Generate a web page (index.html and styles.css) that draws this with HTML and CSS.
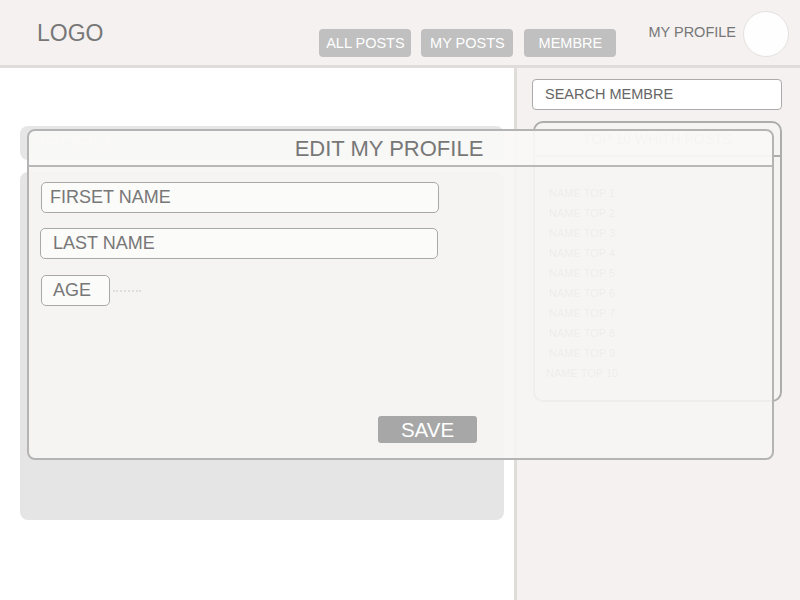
FILE: index.html
```html
<!DOCTYPE html>
<html>
<head>
<meta charset="utf-8">
<link rel="stylesheet" href="styles.css">
</head>
<body>
<header class="topbar">
  <div class="logo">LOGO</div>
  <nav class="nav">
    <a class="nav-btn">ALL POSTS</a>
    <a class="nav-btn">MY POSTS</a>
    <a class="nav-btn">MEMBRE</a>
  </nav>
  <div class="profile">
    <span class="profile-label">MY PROFILE</span>
    <span class="avatar"></span>
  </div>
</header>
<main class="main">
  <section class="content">
    <div class="card-head">PROFILE</div>
    <div class="card-body"></div>
  </section>
  <aside class="sidebar">
    <div class="search">SEARCH MEMBRE</div>
    <div class="top-box">
      <div class="top-head">TOP 10 WHITH POSTS</div>
      <ul class="top-list">
        <li>NAME TOP 1</li>
        <li>NAME TOP 2</li>
        <li>NAME TOP 3</li>
        <li>NAME TOP 4</li>
        <li>NAME TOP 5</li>
        <li>NAME TOP 6</li>
        <li>NAME TOP 7</li>
        <li>NAME TOP 8</li>
        <li>NAME TOP 9</li>
        <li class="last">NAME TOP 10</li>
      </ul>
    </div>
  </aside>
</main>
<div class="modal">
  <div class="modal-head">EDIT MY PROFILE</div>
  <div class="modal-body">
    <div class="field field-first">FIRSET NAME</div>
    <div class="field field-last">LAST NAME</div>
    <div class="age-row">
      <div class="field field-age">AGE</div>
      <span class="dots"></span>
    </div>
    <button class="save">SAVE</button>
  </div>
</div>
</body>
</html>
```
FILE: styles.css
```css
* { box-sizing: border-box; }
html, body { margin: 0; padding: 0; }
body {
  width: 800px;
  height: 600px;
  overflow: hidden;
  font-family: "Liberation Sans", Arial, sans-serif;
  background: #ffffff;
  position: relative;
}
.topbar {
  height: 68px;
  background: #f4f1f0;
  border-bottom: 3px solid #dfdcda;
  display: flex;
  align-items: center;
  padding-left: 37px;
  padding-right: 11px;
}
.logo {
  font-size: 23px;
  color: #777777;
  margin-top: 2px;
}
.nav {
  margin-left: auto;
  display: flex;
  gap: 10px;
  align-self: flex-end;
  margin-bottom: 8px;
}
.nav-btn {
  width: 92px;
  height: 28px;
  background: #c0c0c0;
  color: #ffffff;
  border-radius: 4px;
  font-size: 14.5px;
  display: flex;
  align-items: center;
  justify-content: center;
}
.nav-btn:nth-child(3) { margin-left: 1px; }
.profile {
  margin-left: 32px;
  display: flex;
  align-items: center;
  gap: 7px;
}
.profile-label {
  font-size: 14.5px;
  color: #777777;
  margin-top: -1px;
}
.avatar {
  width: 46px;
  height: 46px;
  border-radius: 50%;
  background: #fefefe;
  border: 1px solid #e4e1df;
  margin-top: 2px;
}
.main {
  display: flex;
  height: 532px;
}
.content {
  width: 517px;
  padding: 58px 10px 0 20px;
  border-right: 3px solid #dfdcda;
  display: flex;
  flex-direction: column;
  gap: 12px;
}
.card-head {
  height: 34px;
  background: #e6e6e6;
  border-radius: 8px;
  color: #ffffff;
  font-size: 20px;
  line-height: 34px;
  padding-left: 12px;
}
.card-body {
  height: 348px;
  background: #e5e5e5;
  border-radius: 8px;
}
.sidebar {
  flex: 1;
  background: #f4f1f0;
  padding: 11px 18px 0 15px;
  display: flex;
  flex-direction: column;
  gap: 11px;
}
.search {
  height: 31px;
  background: #ffffff;
  border: 1px solid #ababab;
  border-radius: 4px;
  font-size: 14.5px;
  color: #666666;
  line-height: 29px;
  padding-left: 12px;
}
.top-box {
  margin-left: 1px;
  height: 281px;
  border: 2px solid #adadad;
  border-radius: 10px;
  background: #f6f4f3;
}
.top-head {
  height: 34px;
  border-bottom: 2px solid #adadad;
  text-align: center;
  font-size: 14px;
  line-height: 32px;
  color: #b0b0b0;
}
.top-list {
  list-style: none;
  margin: 0;
  padding: 26px 0 0 14px;
}
.top-list li {
  height: 20px;
  line-height: 20px;
  font-size: 11px;
  color: #9a9a9a;
}
.top-list li.last { margin-left: -3px; }
.modal {
  position: absolute;
  left: 27px;
  top: 129px;
  width: 747px;
  height: 331px;
  border: 2px solid #b4b4b4;
  border-radius: 8px;
  background: rgba(246, 245, 243, 0.9);
  display: flex;
  flex-direction: column;
}
.modal-head {
  height: 36px;
  border-bottom: 2px solid #b8b8b8;
  background: rgba(255, 255, 255, 0.35);
  border-radius: 6px 6px 0 0;
  text-align: center;
  font-size: 22px;
  line-height: 35px;
  color: #777777;
  padding-right: 23px;
}
.modal-body {
  flex: 1;
  display: flex;
  flex-direction: column;
  padding: 15px 0 15px 12px;
}
.field {
  height: 31px;
  background: #fbfbfa;
  border: 1px solid #a9a9a9;
  border-radius: 5px;
  font-size: 18px;
  color: #777777;
  line-height: 29px;
}
.field-first {
  width: 398px;
  padding-left: 8px;
}
.field-last {
  width: 398px;
  margin-top: 15px;
  margin-left: -1px;
  padding-left: 12px;
}
.age-row {
  margin-top: 16px;
  display: flex;
  align-items: center;
  gap: 3px;
}
.field-age {
  width: 69px;
  padding-left: 11px;
}
.dots {
  width: 28px;
  border-top: 2px dotted #dedede;
}
.save {
  margin-top: auto;
  margin-left: 337px;
  width: 99px;
  height: 27px;
  background: #a7a7a7;
  color: #ffffff;
  border: none;
  border-radius: 3px;
  font-family: "Liberation Sans", Arial, sans-serif;
  font-size: 20.5px;
  line-height: 27px;
  padding: 0;
}
```
